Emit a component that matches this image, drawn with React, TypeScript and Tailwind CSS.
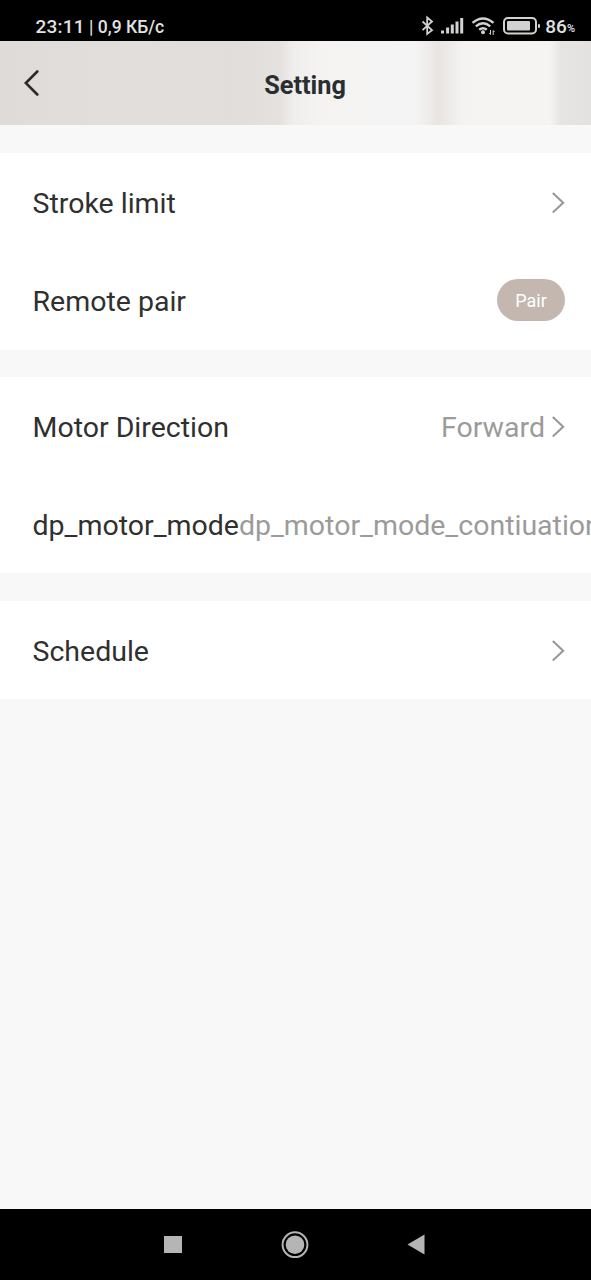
import type { ReactNode } from 'react';

const Chevron = () => (
  <svg className="w-[14px] h-[22px] shrink-0" viewBox="0 0 14 22" fill="none" stroke="#969696" strokeWidth="2">
    <path d="M1.8 1 L12.2 10.7 L1.8 20.4" />
  </svg>
);

const StatusBar = () => (
  <div className="h-[41px] shrink-0 bg-black text-[#e2e2e2] flex items-start justify-between pl-[35.5px] pr-[16px] pt-[15px]">
    <div className="flex items-center h-[22px] pt-[2px] font-medium whitespace-pre">
      <span className="text-[19px] tracking-[0.2px]">23:11</span>
      <span className="text-[17.5px]"> | 0,9 КБ/с</span>
    </div>
    <div className="flex items-center h-[22px]">
      <svg className="w-[76px] h-[22px]" viewBox="421 15 76 22" fill="none" stroke="#d2d2d2">
        <path d="M422.5 21.5 L432 30.2 L427.2 34 V17.5 L432 21.5 L422.5 30.2" strokeWidth="1.8" />
        <path
          d="M441 33.5 v-3 h3 v3z M446.1 33.5 v-6 h3 v6z M450.8 33.5 v-9 h3 v9z M455.5 33.5 v-12 h3 v12z M460.2 33.5 v-15.5 h3 v15.5z"
          fill="#d2d2d2"
          stroke="none"
        />
        <path d="M472.5 22.8 Q483 14 493.5 22.8 M475.8 26.4 Q483 20.3 490.2 26.4 M479.2 29.8 Q483 26.8 486.8 29.8" strokeWidth="2.4" />
        <circle cx="483" cy="32.2" r="2" fill="#d2d2d2" stroke="none" />
        <path d="M490.5 30 v4.5 M489.3 33 L490.5 34.5 M493.2 35 v-4.5 M493.2 30.5 L494.6 32" strokeWidth="1" />
      </svg>
      <svg className="w-[38px] h-[18px] ml-[6px]" viewBox="0 0 38 18">
        <rect x="1" y="1" width="32" height="15.5" rx="4" fill="none" stroke="#d2d2d2" strokeWidth="2" />
        <rect x="4" y="4" width="23" height="9.5" rx="1" fill="#d2d2d2" />
        <rect x="35" y="7" width="2" height="4" rx="1" fill="#d2d2d2" />
      </svg>
      <span className="text-[19px] font-medium ml-1 pt-[2px]">86</span>
      <span className="text-[11px] font-medium mt-[6px]">%</span>
    </div>
  </div>
);

const Header = () => (
  <header className="h-[84px] shrink-0 flex items-center pl-6 bg-[linear-gradient(90deg,#dfdbd8_0px,#e1dedc_130px,#e0dddb_235px,#e5e1df_280px,#f0eeed_294px,#f4f3f2_320px,#f5f4f4_415px,#e9e5e3_438px,#ece9e7_448px,#f4f3f2_462px,#f5f4f3_550px,#e6e5e3_561px,#e3e2e0_591px)]">
    <svg className="w-[15px] h-[26px]" viewBox="0 0 15 26" fill="none" stroke="#2b2b2b" strokeWidth="2.6" strokeLinecap="round">
      <path d="M13.3 1.5 L1.8 13 L13.3 24.5" />
    </svg>
    <h1 className="flex-1 text-center pr-5 pt-[5px] text-[25.3px] font-bold text-[#292e30]">Setting</h1>
  </header>
);

const Row = ({ label, children }: { label: string; children?: ReactNode }) => (
  <div className="flex flex-1 items-center justify-between pl-[32.5px] pr-[26px] pt-[2px] text-[28.5px] whitespace-nowrap text-[#303030]">
    <span className="pt-[2px]">{label}</span>
    <div className="flex items-center text-[#9b9b9b]">{children}</div>
  </div>
);

const NavBar = () => (
  <div className="h-[71px] shrink-0 bg-black">
    <svg className="w-full h-full" viewBox="0 0 591 71" fill="#b5b5b5">
      <rect x="164" y="27" width="18" height="17" />
      <circle cx="295" cy="35.7" r="12.4" fill="none" stroke="#b5b5b5" strokeWidth="2" />
      <circle cx="295" cy="35.7" r="9.3" />
      <path d="M407.5 35.5 L424.5 25.5 V45.5 Z" />
    </svg>
  </div>
);

const App = () => (
  <div className="w-[591px] h-[1280px] flex flex-col overflow-hidden bg-[#f8f8f8] font-[Roboto,sans-serif]">
    <StatusBar />
    <Header />
    <main className="flex-1 flex flex-col pt-7">
      <section className="h-[197px] flex flex-col bg-white">
        <Row label="Stroke limit">
          <Chevron />
        </Row>
        <Row label="Remote pair">
          <button className="w-[68px] h-[42px] mb-1 pt-[2px] rounded-full bg-[#c3b7af] text-white text-[18px]">Pair</button>
        </Row>
      </section>
      <section className="h-[196px] mt-[27px] flex flex-col bg-white">
        <Row label="Motor Direction">
          <span className="mr-[6px] pt-[2px]">Forward</span>
          <Chevron />
        </Row>
        <Row label="dp_motor_mode">
          <span className="pt-[2px]">dp_motor_mode_contiuation</span>
        </Row>
      </section>
      <section className="h-[98px] mt-7 flex flex-col bg-white">
        <Row label="Schedule">
          <Chevron />
        </Row>
      </section>
    </main>
    <NavBar />
  </div>
);

export default App;
